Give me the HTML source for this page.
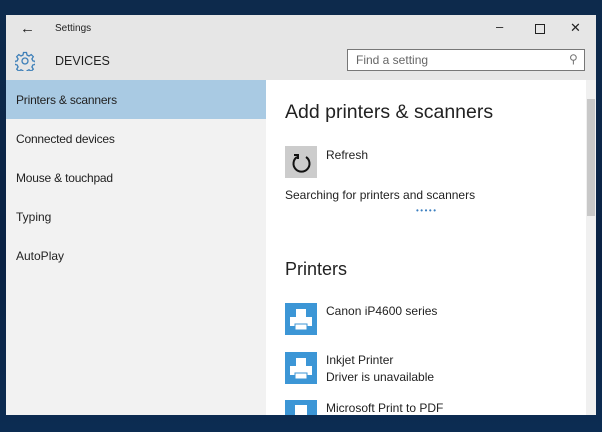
<!DOCTYPE html><html><head><style>
body{margin:0;width:602px;height:432px;background:linear-gradient(180deg,#0d2a4c,#0a2244 60%,#0c2c52);font-family:"Liberation Sans",sans-serif;position:relative;overflow:hidden}
.win{position:absolute;left:6px;top:15px;width:590px;height:400px;background:#f2f2f2;overflow:hidden}
.hdr{position:absolute;left:0;top:0;width:590px;height:65px;background:#e6e6e6}
.t{position:absolute;font-size:12px;color:#222;white-space:nowrap}
.s{font-size:12px;left:10px}
.side{position:absolute;left:0;top:65px;width:260px;height:335px;background:#f2f2f2}
.sel{position:absolute;left:0;top:65px;width:260px;height:39px;background:#a9cae3}
.main{position:absolute;left:260px;top:65px;width:320px;height:335px;background:#fff}
.icon{position:absolute;width:32px;height:32px;background:#3c96d6}
</style></head><body>
<div class="win">
<div class="hdr"></div>
<div class="t" style="left:14px;top:5px;font-size:15px">&#8592;</div>
<div class="t" style="left:49px;top:8px;font-size:10px">Settings</div>
<div class="t" style="left:490px;top:4px;font-size:13px">&#8211;</div>
<div style="position:absolute;left:529px;top:9px;width:8px;height:8px;border:1px solid #222"></div>
<div class="t" style="left:564px;top:5px;font-size:13px">&#10005;</div>
<svg style="position:absolute;left:9px;top:36px" width="20" height="20" viewBox="0 0 20 20"><g fill="none" stroke="#3d7fb8" stroke-width="1.3"><circle cx="10" cy="10" r="3"/><path d="M8.5 1.5h3l.5 2.5 2 1 2.2-1.4 2.1 2.1-1.4 2.2 1 2 2.5.5v3l-2.5.5-1 2 1.4 2.2-2.1 2.1-2.2-1.4-2 1-.5 2.5h-3l-.5-2.5-2-1-2.2 1.4-2.1-2.1 1.4-2.2-1-2-2.5-.5v-3l2.5-.5 1-2-1.4-2.2 2.1-2.1 2.2 1.4 2-1z"/></g></svg>
<div class="t" style="left:49px;top:39px;font-size:12.5px">DEVICES</div>
<div style="position:absolute;left:341px;top:34px;width:238px;height:22px;border:1px solid #777;background:#fff;box-sizing:border-box"></div>
<div class="t" style="left:350px;top:38px;font-size:12px;color:#666">Find a setting</div>
<div class="t" style="left:563px;top:37px;font-size:12px;color:#777">&#9906;</div>
<div class="side"></div><div class="sel"></div>
<div class="t s" style="top:78px;letter-spacing:-0.2px">Printers &amp; scanners</div>
<div class="t s" style="top:117px;letter-spacing:-0.2px">Connected devices</div>
<div class="t s" style="top:156px;letter-spacing:-0.2px">Mouse &amp; touchpad</div>
<div class="t s" style="top:195px">Typing</div>
<div class="t s" style="top:234px">AutoPlay</div>
<div class="main"></div>
<div style="position:absolute;left:580px;top:65px;width:10px;height:335px;background:#f0f0f0"></div>
<div style="position:absolute;left:581px;top:84px;width:8px;height:117px;background:#c8c8c8"></div>
<div class="t" style="left:279px;top:86px;font-size:19.5px">Add printers &amp; scanners</div>
<div style="position:absolute;left:279px;top:131px;width:32px;height:32px;background:#ccc"></div>
<svg style="position:absolute;left:279px;top:131px" width="32" height="32" viewBox="0 0 32 32"><path d="M12 11A8 8 0 1 0 21 11" fill="none" stroke="#111" stroke-width="2"/><path d="M9 9h4v4" fill="none" stroke="#111" stroke-width="2"/></svg>
<div class="t" style="left:320px;top:133px">Refresh</div>
<div class="t" style="left:279px;top:173px">Searching for printers and scanners</div>
<div class="t" style="left:410px;top:191px;font-size:8px;color:#3c7fc0;letter-spacing:1.5px">•••••</div>
<div class="t" style="left:279px;top:244px;font-size:18px">Printers</div>
<div class="icon" style="left:279px;top:288px"></div>
<svg style="position:absolute;left:279px;top:288px" width="32" height="32"><rect x="11" y="6" width="10" height="8" fill="#fff"/><rect x="5" y="14" width="22" height="9" fill="#fff"/><rect x="10" y="21" width="12" height="6" fill="#fff" stroke="#3c96d6"/></svg>
<div class="t" style="left:320px;top:289px">Canon iP4600 series</div>
<div class="icon" style="left:279px;top:337px"></div>
<svg style="position:absolute;left:279px;top:337px" width="32" height="32"><rect x="11" y="6" width="10" height="8" fill="#fff"/><rect x="5" y="14" width="22" height="9" fill="#fff"/><rect x="10" y="21" width="12" height="6" fill="#fff" stroke="#3c96d6"/></svg>
<div class="t" style="left:320px;top:338px">Inkjet Printer</div>
<div class="t" style="left:320px;top:355px">Driver is unavailable</div>
<div class="icon" style="left:279px;top:385px"></div>
<svg style="position:absolute;left:279px;top:385px" width="32" height="32"><rect x="10" y="5" width="12" height="12" fill="#fff"/></svg>
<div class="t" style="left:320px;top:386px">Microsoft Print to PDF</div>
</div>
</body></html>
